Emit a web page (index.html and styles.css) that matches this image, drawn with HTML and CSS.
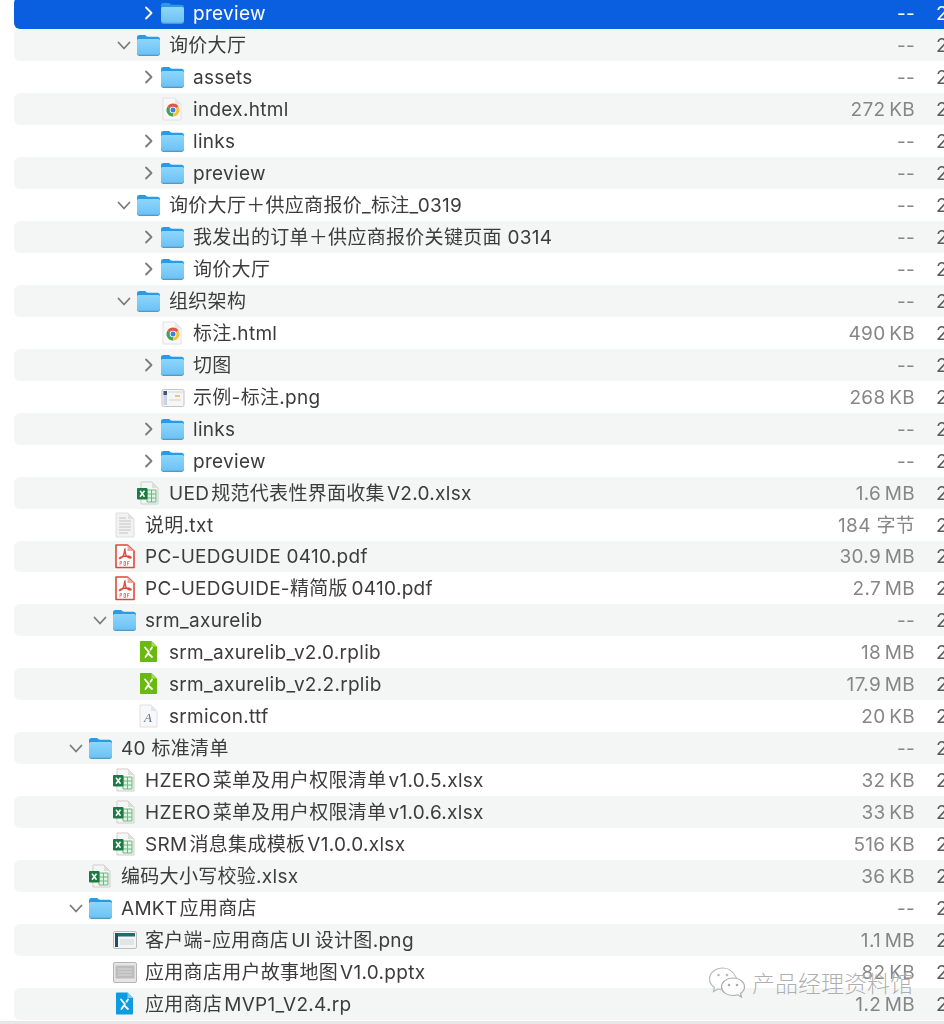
FILE: index.html
```html
<!DOCTYPE html>
<html lang="zh">
<head>
<meta charset="utf-8">
<title>Finder</title>
<link rel="stylesheet" href="styles.css">
</head>
<body>

<svg class="defs" width="0" height="0">
  <defs>
    <linearGradient id="folder-body" x1="0" y1="0" x2="0" y2="1"><stop offset="0" stop-color="#8ed6fb"/><stop offset="1" stop-color="#6cc2f4"/></linearGradient>
  </defs>
  <symbol id="chev-r" viewBox="0 0 14 16"><path d="M5 2.500 10.500 8 5 13.500" fill="none" stroke="currentColor" stroke-width="1.800" stroke-linecap="round" stroke-linejoin="round"/></symbol>
  <symbol id="chev-d" viewBox="0 0 16 14"><path d="M2.500 4.500 8 10.500 13.500 4.500" fill="none" stroke="currentColor" stroke-width="1.800" stroke-linecap="round" stroke-linejoin="round"/></symbol>
  <symbol id="folder" viewBox="1 0 26 26">
    <path d="M2 5.500C2 3.800 3 3 4.500 3H9.500C11 3 11.500 4.800 13 4.800H22C24 4.800 25 5.800 25 7.500V20C25 22 24 23 22 23H5C3 23 2 22 2 20Z" fill="#2a9ae2"/>
    <path d="M2 9C2 7.600 3 7 4.200 7H22.800C24 7 25 7.600 25 9V20.500C25 22 24 22.800 22.500 22.800H4.500C3 22.800 2 22 2 20.500Z" fill="url(#folder-body)"/>
    <path d="M2 20.500C2 22 3 23 4.500 23H22.500C24 23 25 22 25 20.500V21.500C25 23 24 24 22.500 24H4.500C3 24 2 23 2 21.500Z" fill="#5599c2"/>
  </symbol>
  <symbol id="chrome" viewBox="0 0 26 26">
    <path d="M3 2H15L21 8V24H3Z" fill="#f8f8f8" stroke="#e2e2e2"/>
    <path d="M15 2V8H21Z" fill="#e6e6e6"/>
    <path d="M13 14 7.370 10.750A6.500 6.500 0 0 1 18.630 10.750Z" fill="#e2574c"/>
    <path d="M13 14 7.370 10.750A6.500 6.500 0 0 0 13 20.500Z" fill="#3da35a"/>
    <path d="M13 14 13 20.500A6.500 6.500 0 0 0 18.630 10.750Z" fill="#f5c33b"/>
    <circle cx="13" cy="14" r="3.300" fill="#fff"/>
    <circle cx="13" cy="14" r="2.500" fill="#3f7fe0"/>
  </symbol>
  <symbol id="shot" viewBox="0 0 26 26">
    <rect x="2" y="5.500" width="22" height="17" rx="1.500" fill="#f6f6f6" stroke="#c4c4c4"/>
    <rect x="3.500" y="7" width="3.500" height="14" fill="#c9d3e6"/>
    <rect x="3.500" y="7" width="3.500" height="4" fill="#44557a"/>
    <rect x="8" y="7" width="15" height="2" fill="#e2e6ee"/>
    <rect x="15" y="11" width="5" height="2" fill="#f0c27a"/>
    <rect x="9" y="15" width="12" height="2" fill="#e4e4e4"/>
  </symbol>
  <symbol id="shot2" viewBox="0 0 26 26">
    <rect x="1.500" y="4.500" width="23" height="17" rx="1.500" fill="#f4f4f4" stroke="#bdbdbd"/>
    <rect x="3" y="6" width="3" height="14" fill="#1f4f6b"/>
    <rect x="6" y="6" width="17" height="3.500" fill="#1f6b70"/>
    <rect x="8" y="12" width="14" height="6" fill="#dfe6ea"/>
  </symbol>
  <symbol id="slides" viewBox="0 0 26 26">
    <rect x="1.500" y="3.500" width="23" height="20" rx="1.500" fill="#e6e6e6" stroke="#b5b5b5"/>
    <rect x="3.500" y="6.500" width="19" height="13" fill="#bdbdbd"/>
    <path d="M6 13H20M6 10H20M6 16H20" stroke="#d8d8d8"/>
  </symbol>
  <symbol id="xlsx" viewBox="0 0 26 26">
    <path d="M5 2H16L22 8V24H5Z" fill="#f6f6f6" stroke="#cdcdcd"/>
    <path d="M16 2V8H22Z" fill="#dedede"/>
    <path d="M11 10H20V22H11ZM11 14H20M11 18H20M15.500 10V22" fill="#e2f2e2" stroke="#6cb880"/>
    <rect x="1" y="8" width="10.500" height="11.500" rx="1" fill="#1e7a45"/>
    <path d="M4 10.800 8.500 16.800M8.500 10.800 4 16.800" stroke="#fff" stroke-width="1.500"/>
  </symbol>
  <symbol id="txt" viewBox="0 0 26 26">
    <path d="M4 1H16L22 7V25H4Z" fill="#f2f2f2" stroke="#dedede"/>
    <path d="M16 1V7H22Z" fill="#e2e2e2"/>
    <path d="M7 6H14M7 9H19M7 12H19M7 15H19M7 18H19M7 21H16" stroke="#c4c4c4"/>
  </symbol>
  <symbol id="pdf" viewBox="0 0 26 26">
    <path d="M4 2H15.500L22 8V24.500H4Z" fill="#fff" stroke="#e0473c" stroke-width="1.600" stroke-linejoin="round"/>
    <path d="M15.500 2V8H22Z" fill="#f0a8a2"/>
    <path d="M13 6C11.500 6 14 12 9 15 7 16.500 6.500 15 9 14 13 12.800 17 12.800 19 14 20 15.500 17 15.500 15 13.500 13 11.500 13 8 13 6Z" fill="none" stroke="#e0473c" stroke-width="1.300"/>
    <path d="M8 22.500V18.500H9.500V20.300H8M12 18.500V22.500H13.500V18.500H12M15.500 22.500V18.500H17.500M15.500 20.300H17" stroke="#b9665f" stroke-width=".7" fill="none"/>
  </symbol>
  <symbol id="rplib" viewBox="0 0 26 26">
    <path d="M5 2H15.500L21 7.500V22C21 22.600 20.600 23 20 23H5C4.400 23 4 22.600 4 22V3C4 2.400 4.400 2 5 2Z" fill="#69b90f"/>
    <path d="M15.500 2V7.500H21Z" fill="#a5d860"/>
    <path d="M9 8.500 12.800 13 9.500 18M16 8.500 14.500 10.800M12.800 15 16 18" fill="none" stroke="#fff" stroke-width="1.800" stroke-linecap="round"/>
  </symbol>
  <symbol id="rp" viewBox="0 0 26 26">
    <path d="M5 1.500H15.500L21 7V22.500C21 23 20.600 23.500 20 23.500H5C4.400 23.500 4 23 4 22.500V2.500C4 1.900 4.400 1.500 5 1.500Z" fill="#0f9be0"/>
    <path d="M15.500 1.500V7H21Z" fill="#7accf2"/>
    <path d="M9 8.500 12.800 13 9.500 18M16 8.500 14.500 10.800M12.800 15 16 18" fill="none" stroke="#fff" stroke-width="1.800" stroke-linecap="round"/>
  </symbol>
  <symbol id="font" viewBox="0 0 26 26">
    <path d="M4 2H15L21 8V24H4Z" fill="#f7f8fa" stroke="#e0e0e0"/>
    <path d="M15 2V8H21Z" fill="#e6e6e6"/>
    <text x="12" y="19" font-family="Liberation Serif" font-style="italic" font-size="13" fill="#5a6f90" text-anchor="middle">A</text>
  </symbol>
  <symbol id="wechat" viewBox="0 0 38 32">
    <path d="M15 1C7.500 1 1.500 5.800 1.500 12 1.500 15.500 3.500 18.500 6.500 20.500L5.500 24.500 10 22C11 22.300 12 22.500 13 22.500" fill="none" stroke="#bbb" stroke-width="1.200"/>
    <path d="M28.500 11C25.500 4.500 20 1 15 1" fill="none" stroke="#bbb" stroke-width="1.200"/>
    <path d="M25 11C18.500 11 13.500 15 13.500 20 13.500 25 18.500 28.500 25 28.500 26.500 28.500 28 28.300 29.500 27.800L33.500 30 32.500 26.500C35 24.800 36.500 22.500 36.500 20 36.500 15 31.500 11 25 11Z" fill="#fff" fill-opacity=".7" stroke="#aaa" stroke-width="1.200"/>
    <circle cx="10.500" cy="8" r="1.300" fill="#bbb"/><circle cx="19" cy="8" r="1.300" fill="#bbb"/>
    <circle cx="21" cy="18" r="1.300" fill="#aaa"/><circle cx="29" cy="18" r="1.300" fill="#aaa"/>
  </symbol>
</svg>

<div id="main">
<ul class="files">
  <li class="row selected d4"><svg class="chev"><use href="#chev-r"/></svg><svg class="ico"><use href="#folder"/></svg><span class="name">preview</span><span class="size">--</span><span class="date">2</span></li>
  <li class="row d3"><svg class="chev"><use href="#chev-d"/></svg><svg class="ico"><use href="#folder"/></svg><span class="name">询价大厅</span><span class="size">--</span><span class="date">2</span></li>
  <li class="row d4"><svg class="chev"><use href="#chev-r"/></svg><svg class="ico"><use href="#folder"/></svg><span class="name">assets</span><span class="size">--</span><span class="date">2</span></li>
  <li class="row d4"><span class="chev"></span><svg class="ico"><use href="#chrome"/></svg><span class="name">index.html</span><span class="size">272&#8201;KB</span><span class="date">2</span></li>
  <li class="row d4"><svg class="chev"><use href="#chev-r"/></svg><svg class="ico"><use href="#folder"/></svg><span class="name">links</span><span class="size">--</span><span class="date">2</span></li>
  <li class="row d4"><svg class="chev"><use href="#chev-r"/></svg><svg class="ico"><use href="#folder"/></svg><span class="name">preview</span><span class="size">--</span><span class="date">2</span></li>
  <li class="row d3"><svg class="chev"><use href="#chev-d"/></svg><svg class="ico"><use href="#folder"/></svg><span class="name">询价大厅＋供应商报价_标注_0319</span><span class="size">--</span><span class="date">2</span></li>
  <li class="row d4"><svg class="chev"><use href="#chev-r"/></svg><svg class="ico"><use href="#folder"/></svg><span class="name">我发出的订单＋供应商报价关键页面 0314</span><span class="size">--</span><span class="date">2</span></li>
  <li class="row d4"><svg class="chev"><use href="#chev-r"/></svg><svg class="ico"><use href="#folder"/></svg><span class="name">询价大厅</span><span class="size">--</span><span class="date">2</span></li>
  <li class="row d3"><svg class="chev"><use href="#chev-d"/></svg><svg class="ico"><use href="#folder"/></svg><span class="name">组织架构</span><span class="size">--</span><span class="date">2</span></li>
  <li class="row d4"><span class="chev"></span><svg class="ico"><use href="#chrome"/></svg><span class="name">标注.html</span><span class="size">490&#8201;KB</span><span class="date">2</span></li>
  <li class="row d4"><svg class="chev"><use href="#chev-r"/></svg><svg class="ico"><use href="#folder"/></svg><span class="name">切图</span><span class="size">--</span><span class="date">2</span></li>
  <li class="row d4"><span class="chev"></span><svg class="ico"><use href="#shot"/></svg><span class="name">示例-标注.png</span><span class="size">268&#8201;KB</span><span class="date">2</span></li>
  <li class="row d4"><svg class="chev"><use href="#chev-r"/></svg><svg class="ico"><use href="#folder"/></svg><span class="name">links</span><span class="size">--</span><span class="date">2</span></li>
  <li class="row d4"><svg class="chev"><use href="#chev-r"/></svg><svg class="ico"><use href="#folder"/></svg><span class="name">preview</span><span class="size">--</span><span class="date">2</span></li>
  <li class="row d3"><span class="chev"></span><svg class="ico"><use href="#xlsx"/></svg><span class="name">UED&#8202;规范代表性界面收集&#8202;V2.0.xlsx</span><span class="size">1.6&#8201;MB</span><span class="date">2</span></li>
  <li class="row d2"><span class="chev"></span><svg class="ico"><use href="#txt"/></svg><span class="name">说明.txt</span><span class="size">184 字节</span><span class="date">2</span></li>
  <li class="row d2"><span class="chev"></span><svg class="ico"><use href="#pdf"/></svg><span class="name">PC-UEDGUIDE 0410.pdf</span><span class="size">30.9&#8201;MB</span><span class="date">2</span></li>
  <li class="row d2"><span class="chev"></span><svg class="ico"><use href="#pdf"/></svg><span class="name">PC-UEDGUIDE-精简版&#8201;0410.pdf</span><span class="size">2.7&#8201;MB</span><span class="date">2</span></li>
  <li class="row d2"><svg class="chev"><use href="#chev-d"/></svg><svg class="ico"><use href="#folder"/></svg><span class="name">srm_axurelib</span><span class="size">--</span><span class="date">2</span></li>
  <li class="row d3"><span class="chev"></span><svg class="ico"><use href="#rplib"/></svg><span class="name">srm_axurelib_v2.0.rplib</span><span class="size">18&#8201;MB</span><span class="date">2</span></li>
  <li class="row d3"><span class="chev"></span><svg class="ico"><use href="#rplib"/></svg><span class="name">srm_axurelib_v2.2.rplib</span><span class="size">17.9&#8201;MB</span><span class="date">2</span></li>
  <li class="row d3"><span class="chev"></span><svg class="ico"><use href="#font"/></svg><span class="name">srmicon.ttf</span><span class="size">20&#8201;KB</span><span class="date">2</span></li>
  <li class="row d1"><svg class="chev"><use href="#chev-d"/></svg><svg class="ico"><use href="#folder"/></svg><span class="name">40 标准清单</span><span class="size">--</span><span class="date">2</span></li>
  <li class="row d2"><span class="chev"></span><svg class="ico"><use href="#xlsx"/></svg><span class="name">HZERO&#8202;菜单及用户权限清单&#8202;v1.0.5.xlsx</span><span class="size">32&#8201;KB</span><span class="date">2</span></li>
  <li class="row d2"><span class="chev"></span><svg class="ico"><use href="#xlsx"/></svg><span class="name">HZERO&#8202;菜单及用户权限清单&#8202;v1.0.6.xlsx</span><span class="size">33&#8201;KB</span><span class="date">2</span></li>
  <li class="row d2"><span class="chev"></span><svg class="ico"><use href="#xlsx"/></svg><span class="name">SRM&#8202;消息集成模板&#8202;V1.0.0.xlsx</span><span class="size">516&#8201;KB</span><span class="date">2</span></li>
  <li class="row d1"><span class="chev"></span><svg class="ico"><use href="#xlsx"/></svg><span class="name">编码大小写校验.xlsx</span><span class="size">36&#8201;KB</span><span class="date">2</span></li>
  <li class="row d1"><svg class="chev"><use href="#chev-d"/></svg><svg class="ico"><use href="#folder"/></svg><span class="name">AMKT&#8202;应用商店</span><span class="size">--</span><span class="date">2</span></li>
  <li class="row d2"><span class="chev"></span><svg class="ico"><use href="#shot2"/></svg><span class="name">客户端-应用商店&#8202;UI&#8201;设计图.png</span><span class="size">1.1&#8201;MB</span><span class="date">2</span></li>
  <li class="row d2"><span class="chev"></span><svg class="ico"><use href="#slides"/></svg><span class="name">应用商店用户故事地图&#8202;V1.0.pptx</span><span class="size">82&#8201;KB</span><span class="date">2</span></li>
  <li class="row d2"><span class="chev"></span><svg class="ico"><use href="#rp"/></svg><span class="name">应用商店&#8202;MVP1_V2.4.rp</span><span class="size">1.2&#8201;MB</span><span class="date">2</span></li>
</ul>
</div>

<div class="watermark"><svg class="wm-icon"><use href="#wechat"/></svg><span class="wm-text">产品经理资料馆</span></div>

</body>
</html>
```

FILE: styles.css
```css
html, body { margin: 0; padding: 0; height: 1024px; overflow: hidden; background: #fff; }
body { position: relative; font-family: Inter, "Noto Sans CJK SC", sans-serif; font-size: 19px; color: #3c3c3c; }

.defs { display: block; height: 0; }

#main { height: 1021px; overflow: hidden; border-bottom: 3px solid #e9e6e8; }

.files { list-style: none; margin: -2.7px 0 0; padding: 0 0 0 14px; filter: blur(.35px); }

.row { display: flex; align-items: center; height: 31.96px; line-height: 24px; letter-spacing: .3px; border-radius: 6px 0 0 6px; }
.row:nth-child(even) { background: #f4f5f5; }
.row.selected { background: #0a5fe0; color: #fff; }
.row.selected .size, .row.selected .date, .row.selected .chev { color: #fff; }

.d1 { padding-left: 54px; }
.d2 { padding-left: 78px; }
.d3 { padding-left: 102px; }
.d4 { padding-left: 126px; }

.chev { width: 16px; height: 16px; flex: none; color: #7b7b7b; }
.ico { width: 26px; height: 26px; flex: none; margin: 0 7px 0 4px; }
.name, .size, .date { padding-top: 2px; }
.name { flex: 1; white-space: nowrap; }
.size { width: 120px; text-align: right; color: #868686; white-space: nowrap; }
.date { width: 8px; margin-left: 21px; color: #5a5a5a; }

.watermark { position: absolute; left: 708px; top: 965px; display: flex; align-items: center; gap: 6px; color: rgba(120, 120, 120, .6); font-size: 23px; line-height: 32px; font-weight: 300; text-shadow: 0 0 1px #fff; }
.wm-icon { width: 38px; height: 32px; }
.wm-text { padding-top: 3px; }
```
